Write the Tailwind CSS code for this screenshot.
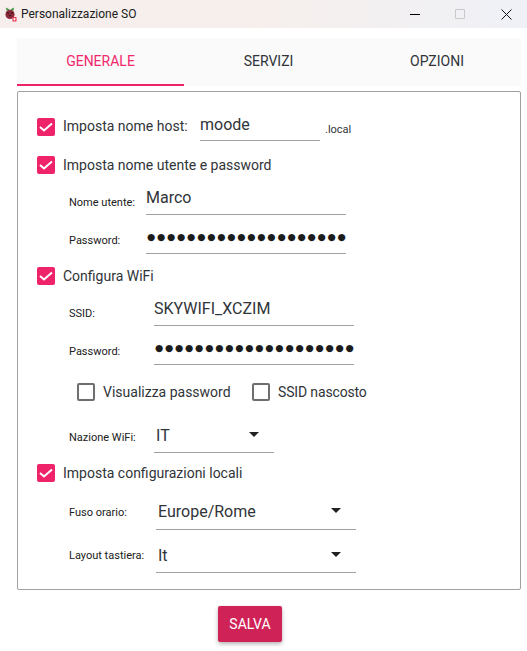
<!DOCTYPE html>
<html lang="it">
<head>
    <meta charset="UTF-8">
    <title>Personalizzazione SO</title>
    <script src="https://cdn.jsdelivr.net/npm/@tailwindcss/browser@4"></script>
</head>
<body class="bg-white w-[527px] h-[651px] overflow-hidden font-['Roboto',sans-serif] text-[#303438]">
    <!-- title bar -->
    <div class="h-[28px] flex items-center bg-gradient-to-r from-[#f5eeec] via-[#f6efec] to-[#eff1f7]">
        <svg class="ml-[3px] w-[14px] h-[16px]" viewBox="0 0 14 16">
            <path d="M3 1.5 L6.5 3.5 L7 5 L3.5 4.5Z M11 1.5 L7.5 3.5 L7 5 L10.5 4.5Z" fill="#3f8f3a"/>
            <circle cx="7" cy="8.5" r="4.6" fill="#8e2a3c"/>
            <circle cx="5" cy="7" r="1.1" fill="#4a1a24"/>
            <circle cx="9" cy="7" r="1.1" fill="#4a1a24"/>
            <circle cx="7" cy="9.5" r="1.1" fill="#4a1a24"/>
            <rect x="9.5" y="11" width="4" height="4.5" rx="0.5" fill="#e8354f"/>
            <rect x="10.7" y="12" width="1.6" height="2.4" fill="#fff"/>
        </svg>
        <span class="ml-[4px] text-[12px] text-[#202020]">Personalizzazione SO</span>
        <div class="ml-auto flex items-center">
            <div class="w-[10px] h-px bg-black mr-[35px]"></div>
            <div class="w-[10px] h-[10px] border border-[#c8c8c8] rounded-[1px] mr-[36px]"></div>
            <svg class="w-[11px] h-[11px] mr-[15px]" viewBox="0 0 11 11"><path d="M.5.5l10 10M10.5.5l-10 10" stroke="#111" fill="none"/></svg>
        </div>
    </div>

    <div class="mt-[10px] ml-[17px] w-[504px]">
        <!-- tabs -->
        <div class="h-[48px] bg-[#fafafa] grid grid-cols-[167px_169px_168px] text-[14px]">
            <div class="flex items-center justify-center border-b-2 border-[#ef2369] text-[#f0286c]">GENERALE</div>
            <div class="flex items-center justify-center pb-[2px]">SERVIZI</div>
            <div class="flex items-center justify-center pb-[2px]">OPZIONI</div>
        </div>

        <!-- panel -->
        <div class="mt-[5px] h-[499px] border border-[#a0a0a0] rounded-[2px] pl-[19px] pt-[20px] flex flex-col text-[14px]">
            <div class="h-[29px] flex items-center">
                <span class="w-[18px] h-[18px] rounded-[2px] bg-[#ef2369] flex items-center justify-center"><svg class="w-[14px] h-[14px]" viewBox="0 0 14 14"><path d="M1 7l4 3.5L13 3.5" stroke="#fff" stroke-width="2" fill="none"/></svg></span>
                <span class="ml-[8px] w-[137px]">Imposta nome host:</span>
                <div class="w-[120px] h-[29px] border-b border-[#a0a0a0] text-[16px] leading-[25px]">moode</div>
                <span class="ml-[5px] text-[11px] mt-[8px]">.local</span>
            </div>
            <div class="mt-[15px] h-[18px] flex items-center">
                <span class="w-[18px] h-[18px] rounded-[2px] bg-[#ef2369] flex items-center justify-center"><svg class="w-[14px] h-[14px]" viewBox="0 0 14 14"><path d="M1 7l4 3.5L13 3.5" stroke="#fff" stroke-width="2" fill="none"/></svg></span>
                <span class="ml-[8px]">Imposta nome utente e password</span>
            </div>
            <div class="mt-[11px] h-[30px] flex items-center pl-[32px]">
                <span class="w-[77px] text-[11px] mt-[6px] text-[#202020]">Nome utente:</span>
                <div class="w-[200px] h-[30px] border-b border-[#a0a0a0] text-[16px] leading-[26px]">Marco</div>
            </div>
            <div class="mt-[9px] h-[30px] flex items-center pl-[32px]">
                <span class="w-[77px] text-[11px] mt-[4px] text-[#202020]">Password:</span>
                <div class="w-[200px] h-[30px] border-b border-[#a0a0a0] pl-[1px] text-[9.5px] leading-[26px] tracking-[1.74px] text-[#1c1c1c] font-['DejaVu_Sans'] whitespace-nowrap">●●●●●●●●●●●●●●●●●●●●</div>
            </div>
            <div class="mt-[13px] h-[18px] flex items-center">
                <span class="w-[18px] h-[18px] rounded-[2px] bg-[#ef2369] flex items-center justify-center"><svg class="w-[14px] h-[14px]" viewBox="0 0 14 14"><path d="M1 7l4 3.5L13 3.5" stroke="#fff" stroke-width="2" fill="none"/></svg></span>
                <span class="ml-[8px]">Configura WiFi</span>
            </div>
            <div class="mt-[11px] h-[30px] flex items-center pl-[32px]">
                <span class="w-[85px] text-[11px] mt-[6px] text-[#202020]">SSID:</span>
                <div class="w-[200px] h-[30px] border-b border-[#a0a0a0] text-[16px] leading-[26px]">SKYWIFI_XCZIM</div>
            </div>
            <div class="mt-[9px] h-[30px] flex items-center pl-[32px]">
                <span class="w-[85px] text-[11px] mt-[5px] text-[#202020]">Password:</span>
                <div class="w-[200px] h-[30px] border-b border-[#a0a0a0] pl-[1px] text-[9.5px] leading-[26px] tracking-[1.74px] text-[#1c1c1c] font-['DejaVu_Sans'] whitespace-nowrap">●●●●●●●●●●●●●●●●●●●●</div>
            </div>
            <div class="mt-[18px] h-[18px] flex items-center pl-[40px]">
                <span class="w-[18px] h-[18px] rounded-[2px] border-2 border-[#6e6e6e]"></span>
                <span class="ml-[8px] w-[149px]">Visualizza password</span>
                <span class="w-[18px] h-[18px] rounded-[2px] border-2 border-[#6e6e6e]"></span>
                <span class="ml-[8px] tracking-[-0.15px]">SSID nascosto</span>
            </div>
            <div class="mt-[22px] h-[30px] flex items-center pl-[32px]">
                <span class="w-[85px] text-[11px] mt-[1px] text-[#202020]">Nazione WiFi:</span>
                <div class="w-[120px] h-[30px] border-b border-[#a0a0a0] text-[16px] leading-[26px] pl-[2px] flex justify-between">IT<span class="w-0 h-0 mt-[9px] mr-[15px] border-x-[5px] border-x-transparent border-t-[5px] border-t-[#222]"></span></div>
            </div>
            <div class="mt-[11px] h-[18px] flex items-center">
                <span class="w-[18px] h-[18px] rounded-[2px] bg-[#ef2369] flex items-center justify-center"><svg class="w-[14px] h-[14px]" viewBox="0 0 14 14"><path d="M1 7l4 3.5L13 3.5" stroke="#fff" stroke-width="2" fill="none"/></svg></span>
                <span class="ml-[8px]">Imposta configurazioni locali</span>
            </div>
            <div class="mt-[18px] h-[30px] flex items-center pl-[32px]">
                <span class="w-[87px] text-[11px] mb-[3px] text-[#202020]">Fuso orario:</span>
                <div class="w-[200px] h-[30px] border-b border-[#a0a0a0] text-[16px] leading-[24px] pl-[2px] flex justify-between">Europe/Rome<span class="w-0 h-0 mt-[8px] mr-[15px] border-x-[5px] border-x-transparent border-t-[5px] border-t-[#222]"></span></div>
            </div>
            <div class="mt-[13px] h-[30px] flex items-center pl-[32px]">
                <span class="w-[87px] text-[11px] mb-[3px] text-[#202020]">Layout tastiera:</span>
                <div class="w-[200px] h-[30px] border-b border-[#a0a0a0] text-[16px] leading-[26px] pl-[2px] flex justify-between">It<span class="w-0 h-0 mt-[9px] mr-[15px] border-x-[5px] border-x-transparent border-t-[5px] border-t-[#222]"></span></div>
            </div>
        </div>

        <!-- save -->
        <div class="mt-[16px] flex justify-center pr-[38px]">
            <div class="w-[64px] h-[36px] rounded-[2px] bg-[#cf2357] text-white text-[14px] flex items-center justify-center shadow-[0_2px_4px_rgba(0,0,0,0.3)]">SALVA</div>
        </div>
    </div>
</body>
</html>
